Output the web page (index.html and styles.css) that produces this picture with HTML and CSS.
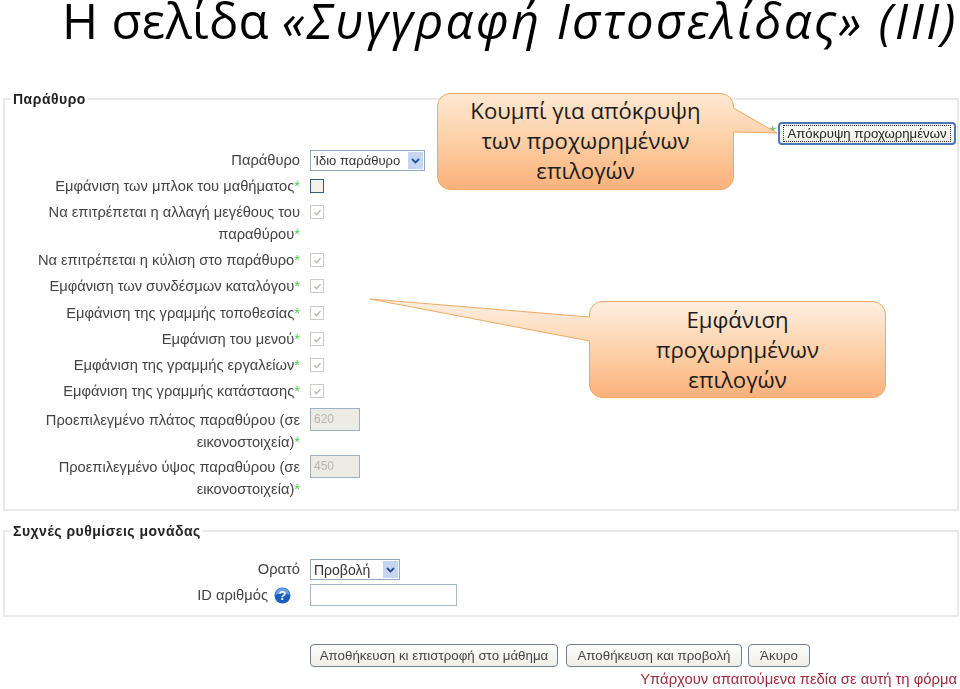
FILE: index.html
```html
<!DOCTYPE html>
<html lang="el">
	<head>
		<meta charset="UTF-8" />
		<title>Η σελίδα «Συγγραφή Ιστοσελίδας» (ΙΙΙ)</title>
		<link rel="stylesheet" href="styles.css">
	</head>
	<body>
		<div class="slide">
			<h1 class="title">Η σελίδα <em>«Συγγραφή Ιστοσελίδας» (ΙΙΙ)</em></h1>

			<form class="form">
				<fieldset class="group group-window">
					<legend>Παράθυρο</legend>
					<div class="advanced-bar">
						<span class="req">*</span>
						<button type="button" class="btn btn-focus"><span>Απόκρυψη προχωρημένων</span></button>
					</div>
					<div class="row">
						<div class="label">Παράθυρο</div>
						<div class="fake-select fake-select-wide">Ίδιο παράθυρο<i class="arrow"><svg width="9" height="6" viewBox="0 0 9 6"><path d="M1 1l3.5 3.5L8 1" fill="none" stroke="#2a4f9c" stroke-width="1.8"/></svg></i></div>
					</div>
					<div class="row">
						<div class="label">Εμφάνιση των μπλοκ του μαθήματος<span class="req">*</span></div>
						<span class="check"></span>
					</div>
					<div class="row">
						<div class="label">Να επιτρέπεται η αλλαγή μεγέθους του παραθύρου<span class="req">*</span></div>
						<span class="check check-off"><svg width="11" height="11" viewBox="0 0 11 11"><path d="M2.5 5.5l2 2.2 4-4.6" fill="none" stroke="#b5b9ad" stroke-width="1.4"/></svg></span>
					</div>
					<div class="row">
						<div class="label">Να επιτρέπεται η κύλιση στο παράθυρο<span class="req">*</span></div>
						<span class="check check-off"><svg width="11" height="11" viewBox="0 0 11 11"><path d="M2.5 5.5l2 2.2 4-4.6" fill="none" stroke="#b5b9ad" stroke-width="1.4"/></svg></span>
					</div>
					<div class="row">
						<div class="label">Εμφάνιση των συνδέσμων καταλόγου<span class="req">*</span></div>
						<span class="check check-off"><svg width="11" height="11" viewBox="0 0 11 11"><path d="M2.5 5.5l2 2.2 4-4.6" fill="none" stroke="#b5b9ad" stroke-width="1.4"/></svg></span>
					</div>
					<div class="row row-shift">
						<div class="label">Εμφάνιση της γραμμής τοποθεσίας<span class="req">*</span></div>
						<span class="check check-off"><svg width="11" height="11" viewBox="0 0 11 11"><path d="M2.5 5.5l2 2.2 4-4.6" fill="none" stroke="#b5b9ad" stroke-width="1.4"/></svg></span>
					</div>
					<div class="row">
						<div class="label">Εμφάνιση του μενού<span class="req">*</span></div>
						<span class="check check-off"><svg width="11" height="11" viewBox="0 0 11 11"><path d="M2.5 5.5l2 2.2 4-4.6" fill="none" stroke="#b5b9ad" stroke-width="1.4"/></svg></span>
					</div>
					<div class="row">
						<div class="label">Εμφάνιση της γραμμής εργαλείων<span class="req">*</span></div>
						<span class="check check-off"><svg width="11" height="11" viewBox="0 0 11 11"><path d="M2.5 5.5l2 2.2 4-4.6" fill="none" stroke="#b5b9ad" stroke-width="1.4"/></svg></span>
					</div>
					<div class="row">
						<div class="label">Εμφάνιση της γραμμής κατάστασης<span class="req">*</span></div>
						<span class="check check-off"><svg width="11" height="11" viewBox="0 0 11 11"><path d="M2.5 5.5l2 2.2 4-4.6" fill="none" stroke="#b5b9ad" stroke-width="1.4"/></svg></span>
					</div>
					<div class="row row-size">
						<div class="label">Προεπιλεγμένο πλάτος παραθύρου (σε εικονοστοιχεία)<span class="req">*</span></div>
						<span class="size-box">620</span>
					</div>
					<div class="row row-size row-size-last">
						<div class="label">Προεπιλεγμένο ύψος παραθύρου (σε εικονοστοιχεία)<span class="req">*</span></div>
						<span class="size-box">450</span>
					</div>
				</fieldset>

				<fieldset class="group group-common">
					<legend>Συχνές ρυθμίσεις μονάδας</legend>
					<div class="row">
						<div class="label">Ορατό</div>
						<div class="fake-select fake-select-small">Προβολή<i class="arrow"><svg width="9" height="6" viewBox="0 0 9 6"><path d="M1 1l3.5 3.5L8 1" fill="none" stroke="#2a4f9c" stroke-width="1.8"/></svg></i></div>
					</div>
					<div class="row">
						<div class="label label-help">ID αριθμός
							<svg class="help" width="17" height="17" viewBox="0 0 17 17">
								<circle cx="8.5" cy="8.5" r="8" fill="#1b5fc0"/>
								<path d="M1.5 8a7 7 0 0 1 14 0c-3 -2.5 -10 -2.5 -14 0z" fill="#6f9fe6"/>
								<text x="8.5" y="13" text-anchor="middle" class="help-mark">?</text>
							</svg>
						</div>
						<span class="text-box"></span>
					</div>
				</fieldset>

				<div class="actions">
					<button type="button" class="btn btn-save">Αποθήκευση κι επιστροφή στο μάθημα</button>
					<button type="button" class="btn btn-view">Αποθήκευση και προβολή</button>
					<button type="button" class="btn btn-cancel">Άκυρο</button>
				</div>
				<p class="note">Υπάρχουν απαιτούμενα πεδία σε αυτή τη φόρμα</p>
			</form>

			<div class="callout callout-hide">
				<svg class="callout-shape" width="297" height="97">
					<defs>
						<linearGradient id="grad-a" x1="0" y1="0" x2="0" y2="1">
							<stop offset="0" stop-color="#fee8d3"/>
							<stop offset="0.5" stop-color="#fdcfa5"/>
							<stop offset="1" stop-color="#fbb17a"/>
						</linearGradient>
					</defs>
					<path d="M13 .5H284A13 13 0 0 1 296.5 13V15L340 40 296.5 39V84A13 13 0 0 1 284 96.5H13A13 13 0 0 1 .5 84V13A13 13 0 0 1 13 .5Z" fill="url(#grad-a)" stroke="#f0a964" stroke-width="1"/>
				</svg>
				<p>Κουμπί για απόκρυψη των προχωρημένων επιλογών</p>
			</div>

			<div class="callout callout-show">
				<svg class="callout-shape" width="297" height="97">
					<defs>
						<linearGradient id="grad-b" x1="0" y1="0" x2="0" y2="1">
							<stop offset="0" stop-color="#fef0e3"/>
							<stop offset="0.5" stop-color="#fdd3ac"/>
							<stop offset="1" stop-color="#fbb17a"/>
						</linearGradient>
					</defs>
					<path d="M13 .5H284A13 13 0 0 1 296.5 13V84A13 13 0 0 1 284 96.5H13A13 13 0 0 1 .5 84V40L-219 -2 .5 16V13A13 13 0 0 1 13 .5Z" fill="url(#grad-b)" stroke="#f0a964" stroke-width="1"/>
				</svg>
				<p>Εμφάνιση προχωρημένων επιλογών</p>
			</div>
		</div>
	</body>
</html>
```

FILE: styles.css
```css
html,
body {
	margin: 0;
	padding: 0;
	background: white;
}
.slide {
	position: relative;
	width: 960px;
	height: 689px;
	overflow: hidden;
	font-family: "Liberation Sans", sans-serif;
}
.title {
	margin: 0;
	height: 50px;
	padding-left: 62px;
	font-family: "Open Sans", sans-serif;
	font-size: 49px;
	font-weight: 400;
	line-height: 40px;
	letter-spacing: 0.3px;
	color: #000;
	white-space: nowrap;
}
.title em {
	letter-spacing: 2.3px;
}
.form {
	padding: 0 1px 0 3px;
	filter: blur(0.35px);
}
.group {
	margin: 0;
	padding: 0;
	border: 2px solid #e9e9e9;
	min-width: 0;
}
.group legend {
	margin-left: 6px;
	padding: 0 2px 0 2px;
	font-size: 14px;
	font-weight: bold;
	letter-spacing: 0.5px;
	line-height: 18px;
	color: #222;
}
.group-window {
	margin-top: 40px;
	height: 421px;
	box-sizing: border-box;
}
.group-common {
	margin-top: 11px;
	height: 95px;
	box-sizing: border-box;
	padding-top: 16px;
}
.advanced-bar {
	display: flex;
	justify-content: flex-end;
	align-items: center;
	gap: 2px;
	height: 22px;
	margin-top: 14px;
	padding-right: 1px;
	margin-bottom: 3px;
}
.row {
	display: grid;
	grid-template-columns: 295px auto;
	column-gap: 10px;
	justify-content: start;
	align-items: start;
	font-size: 14.7px;
	color: #444;
}
.row-shift {
	margin-top: 1px;
}
.label {
	text-align: right;
	line-height: 22px;
	padding: 2px 0;
}
.req {
	color: #58c458;
}
.fake-select {
	display: flex;
	justify-content: space-between;
	align-items: center;
	box-sizing: border-box;
	height: 21px;
	margin-top: 3px;
	padding: 0 1px 0 3px;
	border: 1px solid #8fa9c6;
	font-size: 14px;
	color: #333;
}
.fake-select-wide {
	width: 115px;
	font-size: 13px;
}
.fake-select-small {
	width: 90px;
}
.arrow {
	display: flex;
	align-items: center;
	justify-content: center;
	width: 15px;
	height: 17px;
	background: #c6d6f2;
}
.check {
	display: flex;
	align-items: center;
	justify-content: center;
	box-sizing: border-box;
	width: 14px;
	height: 14px;
	margin-top: 6px;
	border: 1px solid #3b5a78;
	background: #f3f3ee;
}
.check-off {
	border-color: #c9cdc4;
	background: white;
}
.row-size {
	margin-top: 3px;
	height: 47px;
}
.size-box {
	box-sizing: border-box;
	width: 50px;
	height: 23px;
	margin-top: 1px;
	padding-left: 3px;
	border: 1px solid #9db0c8;
	background: #ecebe4;
	font-size: 12px;
	line-height: 21px;
	color: #b4b4b0;
}
.row-size-last {
	margin-top: 0;
}
.label-help {
	display: flex;
	justify-content: flex-end;
	align-items: center;
	gap: 6px;
	padding-right: 9px;
	height: 22px;
}
.help-mark {
	font-family: "Liberation Sans", sans-serif;
	font-size: 13px;
	font-weight: bold;
	fill: white;
}
.text-box {
	display: block;
	box-sizing: border-box;
	width: 147px;
	height: 22px;
	margin-top: 2px;
	border: 1px solid #a5b8cc;
}
.btn {
	display: block;
	box-sizing: border-box;
	height: 23px;
	padding: 0;
	border: 1px solid #6d8299;
	border-radius: 4px;
	background: linear-gradient(#fdfdfb, #efeee6);
	font-family: "Liberation Sans", sans-serif;
	font-size: 13.3px;
	color: #444;
	white-space: nowrap;
}
.btn-focus {
	width: 178px;
	border: 2px solid #4a78b8;
	font-size: 13.2px;
}
.btn-focus span {
	border: 1px dotted #333;
	padding: 0 3px;
	color: #222;
}
.actions {
	display: flex;
	margin-top: 27px;
	padding-left: 307px;
}
.btn-save {
	width: 248px;
}
.btn-view {
	width: 176px;
	margin-left: 8px;
}
.btn-cancel {
	width: 62px;
	margin-left: 6px;
}
.note {
	margin: 3px 2px 0 0;
	text-align: right;
	font-size: 14.8px;
	line-height: 18px;
	color: #a02c3c;
}
.callout {
	position: absolute;
	width: 297px;
	height: 97px;
	display: flex;
	align-items: center;
	justify-content: center;
}
.callout-hide {
	left: 437px;
	top: 93px;
}
.callout-show {
	left: 589px;
	top: 301px;
}
.callout-shape {
	position: absolute;
	left: 0;
	top: 0;
	overflow: visible;
}
.callout p {
	position: relative;
	margin: 0 0 1px;
	width: 240px;
	font-family: "Open Sans", sans-serif;
	font-size: 22.2px;
	line-height: 30px;
	text-align: center;
	color: #1c1c1c;
}
.callout-show p {
	width: 200px;
	margin-bottom: 0;
}
```
